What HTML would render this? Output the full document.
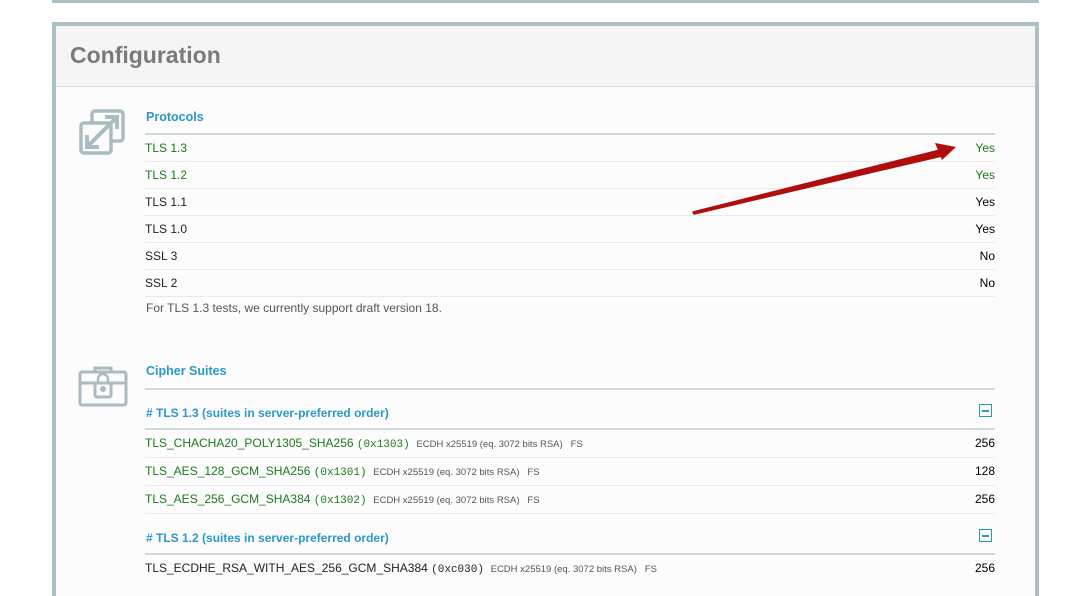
<!DOCTYPE html>
<html><head><style>
body{margin:0;width:1075px;height:581px;overflow:hidden;background:#fff;font-family:"Liberation Sans",Arial,sans-serif;position:relative}
.a{position:absolute}
.t{font-size:12px;color:#222}
.g{color:#1a7a1a}
.mono{font-family:"Liberation Mono",monospace;font-size:11px}
.sm{font-size:9.5px;color:#555}
.ln{position:absolute;left:145px;width:850px;height:1px;background:#e8eaea}
.hl{position:absolute;left:145px;width:850px;height:2px;background:#cfd8da}
.h{color:#2a98c8;font-weight:bold;font-size:12.5px}
.r{position:absolute;right:80px;font-size:12px}
.box{position:absolute;left:979px;width:11px;height:11px;border:1.5px solid #2a9ab0}
.box:after{content:"";position:absolute;left:2px;top:4.5px;width:7px;height:2px;background:#2a9ab0}
</style></head><body>
<div class="a" style="left:52px;top:0;width:987px;height:3px;background:#aac0c4"></div>
<div class="a" style="left:52px;top:22px;width:979px;height:570px;border:4px solid #aac0c4;border-bottom:none;background:#fcfcfc"></div>
<div class="a" style="left:56px;top:26px;width:979px;height:60px;background:#f5f5f5;border-bottom:1px solid #d4dcdd"></div>
<div class="a" style="left:70px;top:42px;font-size:23px;font-weight:bold;color:#7a7a7a">Configuration</div>

<svg class="a" style="left:79px;top:109px" width="48" height="46" viewBox="0 0 48 46" fill="none" stroke="#a9bcc2" stroke-width="3.5">
<rect x="13" y="2" width="31" height="30" rx="3"/><rect x="2" y="14" width="30" height="30" rx="3" fill="#fcfcfc"/>
<path d="M9 37 L37 9" stroke-width="4"/><path d="M26 8 H38 V20" stroke-width="4" fill="none"/><path d="M8 26 V38 H20" stroke-width="4"/>
</svg>
<div class="a h" style="left:146px;top:110px">Protocols</div>
<div class="hl" style="top:133px"></div>
<div class="a t g" style="left:145px;top:141px">TLS 1.3</div><div class="r g" style="top:141px">Yes</div><div class="ln" style="top:161px"></div>
<div class="a t g" style="left:145px;top:168px">TLS 1.2</div><div class="r g" style="top:168px">Yes</div><div class="ln" style="top:188px"></div>
<div class="a t" style="left:145px;top:195px">TLS 1.1</div><div class="r" style="top:195px">Yes</div><div class="ln" style="top:215px"></div>
<div class="a t" style="left:145px;top:222px">TLS 1.0</div><div class="r" style="top:222px">Yes</div><div class="ln" style="top:242px"></div>
<div class="a t" style="left:145px;top:249px">SSL 3</div><div class="r" style="top:249px">No</div><div class="ln" style="top:269px"></div>
<div class="a t" style="left:145px;top:276px">SSL 2</div><div class="r" style="top:276px">No</div><div class="ln" style="top:296px"></div>
<div class="a t" style="left:146px;top:301px;color:#555">For TLS 1.3 tests, we currently support draft version 18.</div>

<svg class="a" style="left:78px;top:366px" width="50" height="42" viewBox="0 0 50 42" fill="none" stroke="#a9bcc2" stroke-width="3">
<path d="M17 6 V2 H33 V6"/><rect x="2" y="6" width="46" height="33" rx="2"/><path d="M2 17 H48"/>
<rect x="17" y="17" width="16" height="14" rx="2" fill="#fcfcfc"/><path d="M20 17 V13 a5 5 0 0 1 10 0 V17" stroke-width="2.5"/><circle cx="25" cy="23" r="1.5" fill="#a9bcc2"/>
</svg>
<div class="a h" style="left:146px;top:364px">Cipher Suites</div>
<div class="hl" style="top:388px"></div>
<div class="a h" style="left:146px;top:406px;font-size:12px"># TLS 1.3 (suites in server-preferred order)</div><div class="box" style="top:404px"></div>
<div class="hl" style="top:428px;height:1.5px"></div>
<div class="a t g" style="left:145px;top:436px">TLS_CHACHA20_POLY1305_SHA256 <span class="mono">(0x1303)</span> &nbsp;<span class="sm">ECDH x25519 (eq. 3072 bits RSA) &nbsp; FS</span></div><div class="r" style="top:436px">256</div><div class="ln" style="top:457px"></div>
<div class="a t g" style="left:145px;top:464px">TLS_AES_128_GCM_SHA256 <span class="mono">(0x1301)</span> &nbsp;<span class="sm">ECDH x25519 (eq. 3072 bits RSA) &nbsp; FS</span></div><div class="r" style="top:464px">128</div><div class="ln" style="top:485px"></div>
<div class="a t g" style="left:145px;top:492px">TLS_AES_256_GCM_SHA384 <span class="mono">(0x1302)</span> &nbsp;<span class="sm">ECDH x25519 (eq. 3072 bits RSA) &nbsp; FS</span></div><div class="r" style="top:492px">256</div><div class="ln" style="top:513px"></div>
<div class="a h" style="left:146px;top:531px;font-size:12px"># TLS 1.2 (suites in server-preferred order)</div><div class="box" style="top:529px"></div>
<div class="hl" style="top:553px;height:1.5px"></div>
<div class="a t" style="left:145px;top:561px">TLS_ECDHE_RSA_WITH_AES_256_GCM_SHA384 <span class="mono">(0xc030)</span> &nbsp;<span class="sm">ECDH x25519 (eq. 3072 bits RSA) &nbsp; FS</span></div><div class="r" style="top:561px">256</div>

<svg class="a" style="left:0;top:0" width="1075" height="581">
<path d="M694 214 L693 212 L940 150 L942 156 Z" fill="#b00d0d" stroke="#b00d0d" stroke-width="1.5" stroke-linejoin="round"/>
<path d="M956 147 L935 143 L942 160 Z" fill="#b00d0d"/>
</svg>
</body></html>
